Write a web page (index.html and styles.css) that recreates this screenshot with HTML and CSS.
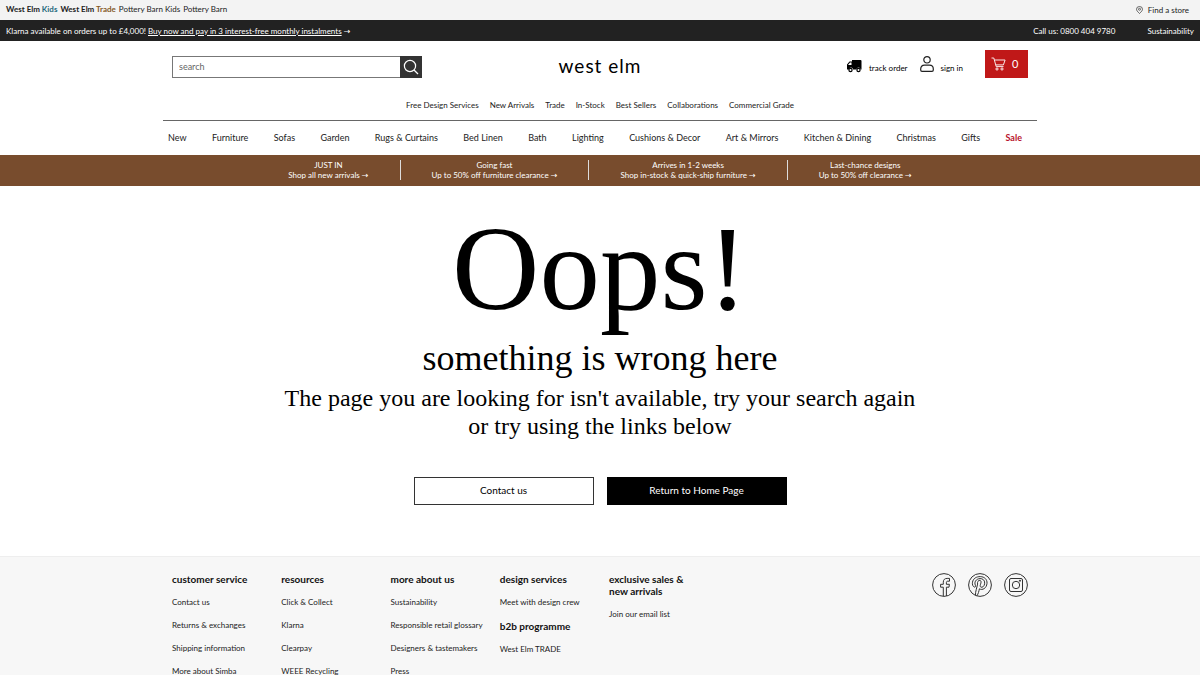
FILE: index.html
```html
<!DOCTYPE html>
<html lang="en">
<head>
    <meta charset="UTF-8">
    <meta name="viewport" content="width=device-width, initial-scale=1.0">
    <title>West Elm</title>
    <link rel="stylesheet" href="styles.css">
</head>
<body>
    <div class="brand-bar">
        <nav class="brands">
            <a href="#"><b>West Elm <span class="kids">Kids</span></b></a>
            <a href="#"><b>West Elm <span class="trade">Trade</span></b></a>
            <a href="#">Pottery Barn Kids</a>
            <a href="#">Pottery Barn</a>
        </nav>
        <a class="find-store" href="#">
            <svg width="7" height="8" viewBox="0 0 14 16" fill="none" stroke="#444" stroke-width="1.6">
                <path d="M7 15C3 11 1 9 1 6.5a6 5.5 0 0 1 12 0C13 9 11 11 7 15z"/>
                <circle cx="7" cy="6.5" r="2"/>
            </svg>
            Find a store
        </a>
    </div>

    <div class="message-bar">
        <p>Klarna available on orders up to £4,000! <a class="underlined" href="#">Buy now and pay in 3 interest-free monthly instalments</a> <span class="arrow">→</span></p>
        <div class="message-links">
            <a href="#">Call us: 0800 404 9780</a>
            <a href="#">Sustainability</a>
        </div>
    </div>

    <header class="container">
        <div class="header-top">
            <form class="search">
                <input type="text" placeholder="search" aria-label="search">
                <button type="button" aria-label="Search">
                    <svg width="16" height="16" viewBox="0 0 16 16" fill="none" stroke="#fff" stroke-width="1.2">
                        <circle cx="7" cy="7" r="5.6"/>
                        <path d="M11 11l4 4"/>
                    </svg>
                </button>
            </form>
            <a class="logo" href="#">west elm</a>
            <div class="account">
                <a class="track" href="#">
                    <svg width="16" height="14" viewBox="0 0 32 28">
                        <path d="M12 2h17a2 2 0 0 1 2 2v17h-2a4 4 0 0 0-8 0h-7a4 4 0 0 0-8 0H2v-10l5-6h5z" fill="#000"/>
                        <path d="M4 12l4-5h3v5z" fill="#fff"/>
                        <circle cx="9" cy="22" r="3.2" fill="#fff" stroke="#000" stroke-width="2.4"/>
                        <circle cx="25" cy="22" r="3.2" fill="#fff" stroke="#000" stroke-width="2.4"/>
                    </svg>
                    <span>track order</span>
                </a>
                <a class="sign-in" href="#">
                    <svg width="14" height="16" viewBox="0 0 14 16" fill="none" stroke="#222" stroke-width="1.2">
                        <circle cx="7" cy="3.8" r="3.2"/>
                        <path d="M2 15.400a1.300 1.300 0 0 1-1.300-1.300v-1C.7 10.600 2 9.200 4.500 9.200h5c2.500 0 3.800 1.400 3.800 3.900v1a1.300 1.300 0 0 1-1.300 1.300z"/>
                    </svg>
                    <span>sign in</span>
                </a>
                <a class="cart" href="#">
                    <svg width="15" height="14" viewBox="0 0 15 14" fill="none" stroke="#fff" stroke-width="0.9">
                        <path d="M.5 1h2.300l2.400 8.600h7.300M3.500 3h10.600l-1.700 4.900H4.900"/>
                        <circle cx="6" cy="12" r="1.1"/>
                        <circle cx="11" cy="12" r="1.1"/>
                    </svg>
                    0
                </a>
            </div>
        </div>

        <nav class="quick-nav">
            <a href="#">Free Design Services</a>
            <a href="#">New Arrivals</a>
            <a href="#">Trade</a>
            <a href="#">In-Stock</a>
            <a href="#">Best Sellers</a>
            <a href="#">Collaborations</a>
            <a href="#">Commercial Grade</a>
        </nav>

        <nav class="main-nav">
            <a href="#">New</a>
            <a href="#">Furniture</a>
            <a href="#">Sofas</a>
            <a href="#">Garden</a>
            <a href="#">Rugs &amp; Curtains</a>
            <a href="#">Bed Linen</a>
            <a href="#">Bath</a>
            <a href="#">Lighting</a>
            <a href="#">Cushions &amp; Decor</a>
            <a href="#">Art &amp; Mirrors</a>
            <a href="#">Kitchen &amp; Dining</a>
            <a href="#">Christmas</a>
            <a href="#">Gifts</a>
            <a class="sale" href="#">Sale</a>
        </nav>
    </header>

    <div class="promo">
        <a href="#">JUST IN<br>Shop all new arrivals <span class="arrow">→</span></a>
        <a href="#">Going fast<br>Up to 50% off furniture clearance <span class="arrow">→</span></a>
        <a href="#">Arrives in 1-2 weeks<br>Shop in-stock &amp; quick-ship furniture <span class="arrow">→</span></a>
        <a href="#">Last-chance designs<br>Up to 50% off clearance <span class="arrow">→</span></a>
    </div>

    <main class="error">
        <h1>Oops!</h1>
        <h2>something is wrong here</h2>
        <p>The page you are looking for isn't available, try your search again<br>or try using the links below</p>
        <div class="actions">
            <a class="btn" href="#">Contact us</a>
            <a class="btn btn-dark" href="#">Return to Home Page</a>
        </div>
    </main>

    <footer>
        <div class="container footer-grid">
            <div class="footer-col">
                <h3>customer service</h3>
                <a href="#">Contact us</a>
                <a href="#">Returns &amp; exchanges</a>
                <a href="#">Shipping information</a>
                <a href="#">More about Simba</a>
            </div>
            <div class="footer-col">
                <h3>resources</h3>
                <a href="#">Click &amp; Collect</a>
                <a href="#">Klarna</a>
                <a href="#">Clearpay</a>
                <a href="#">WEEE Recycling</a>
            </div>
            <div class="footer-col">
                <h3>more about us</h3>
                <a href="#">Sustainability</a>
                <a href="#">Responsible retail glossary</a>
                <a href="#">Designers &amp; tastemakers</a>
                <a href="#">Press</a>
            </div>
            <div class="footer-col">
                <h3>design services</h3>
                <a href="#">Meet with design crew</a>
                <h3>b2b programme</h3>
                <a href="#">West Elm TRADE</a>
            </div>
            <div class="footer-col">
                <h3>exclusive sales &amp;<br>new arrivals</h3>
                <a href="#">Join our email list</a>
            </div>
            <div class="social">
                <a href="#" aria-label="Facebook">
                    <svg width="24" height="24" viewBox="0 0 24 24" fill="none" stroke="#333" stroke-width="1">
                        <circle cx="12" cy="12" r="11.400"/>
                        <path d="M11.300 23v-8.800H8.600v-2.900h2.700V9.200c0-2.600 1.500-3.800 3.800-3.800h2.400v2.800h-1.700c-1 0-1.400.5-1.400 1.400v1.700h3l-.4 2.900h-2.600V23"/>
                    </svg>
                </a>
                <a href="#" aria-label="Pinterest">
                    <svg width="24" height="24" viewBox="0 0 24 24" fill="none" stroke="#333" stroke-width="1">
                        <circle cx="12" cy="12" r="11.400"/>
                        <path d="M7.500 22.300c-.2-2 .3-4 .8-5.900l1.300-5.300c-.5-2.300.8-4 2.300-3.700 2.600.6 0 4.300.3 5.800.6 2.200 4.300 1 4.500-3 .2-3.200-2.200-4.700-4.700-4.600-3.900.1-6 3.600-4.700 6.500.5.9.2 1.900-.5 2.100-2.200-.5-2.700-3-2.300-5C5.100 5.500 8.500 3.500 12.300 3.600c4.200.1 7 2.900 6.700 6.700-.4 5-4.600 7.300-7.600 5.500-.5 2.500-1.100 5-2.500 7"/>
                    </svg>
                </a>
                <a href="#" aria-label="Instagram">
                    <svg width="24" height="24" viewBox="0 0 24 24" fill="none" stroke="#333" stroke-width="1">
                        <circle cx="12" cy="12" r="11.400"/>
                        <rect x="5.500" y="5.500" width="13" height="13" rx="1.500"/>
                        <circle cx="12" cy="12" r="3.700"/>
                        <circle cx="16" cy="7.700" r=".6" fill="#333"/>
                    </svg>
                </a>
            </div>
        </div>
    </footer>
</body>
</html>
```
FILE: styles.css
```css
* {
    box-sizing: border-box;
}

body {
    margin: 0;
    background-color: #fff;
    color: #222;
    font-family: Lato, "Open Sans", sans-serif;
    font-size: 8px;
    line-height: 10px;
    overflow-x: hidden;
}

a {
    color: inherit;
    text-decoration: none;
}

h1,
h2,
h3,
p {
    margin: 0;
    font-weight: normal;
}

.container {
    max-width: 874px;
    margin: 0 auto;
}

.arrow {
    font-family: "DejaVu Sans", sans-serif;
    line-height: 1;
}

.brand-bar {
    display: flex;
    justify-content: space-between;
    height: 20px;
    padding: 4px 11px 0 6px;
    background-color: #f3f3f3;
}

.brands {
    display: flex;
    gap: 3px;
}

.kids {
    color: #1f6a7d;
}

.trade {
    color: #85591f;
}

.find-store {
    display: flex;
    align-items: center;
    gap: 5px;
    height: 12px;
}

.message-bar {
    display: flex;
    justify-content: space-between;
    align-items: center;
    height: 21px;
    padding: 0 6px;
    background-color: #222;
    color: #fff;
}

.message-links {
    display: flex;
    gap: 32px;
}

.underlined {
    text-decoration: underline;
}

.header-top {
    display: grid;
    grid-template-columns: 1fr auto 1fr;
    align-items: center;
    padding: 9px 9px 0;
}

.search {
    display: flex;
    width: 250px;
    height: 22px;
    margin-top: 5px;
}

.search input {
    flex: 1;
    min-width: 0;
    padding: 0 6px;
    border: 1px solid #777;
    border-right: 0;
    border-radius: 0;
    font-family: inherit;
    font-size: 9px;
}

.search input::placeholder {
    color: #666;
}

.search button {
    display: flex;
    align-items: center;
    justify-content: center;
    width: 22px;
    padding: 0;
    border: 0;
    background-color: #333;
}

.logo {
    margin-top: 3px;
    color: #000;
    font-size: 19px;
    line-height: 24px;
    letter-spacing: 1px;
}

.account {
    display: flex;
    justify-content: flex-end;
    align-items: center;
    color: #000;
}

.track,
.sign-in {
    display: flex;
    align-items: center;
    gap: 7px;
    margin-right: 12px;
}

.sign-in {
    margin-right: 22px;
}

.track {
    padding-top: 4px;
}

.track span {
    padding-top: 4px;
}

.sign-in span {
    padding-top: 8px;
}

.cart {
    display: flex;
    align-items: center;
    gap: 6px;
    width: 43px;
    height: 28px;
    padding-left: 6px;
    background-color: #c01818;
    color: #fff;
    font-size: 11px;
}

.quick-nav {
    display: flex;
    justify-content: center;
    gap: 11px;
    padding: 22px 0 10px;
}

.main-nav {
    display: flex;
    justify-content: space-between;
    align-items: center;
    height: 35px;
    padding: 0 15px 0 5px;
    border-top: 1px solid #666;
    font-size: 9px;
}

.sale {
    color: #b8122b;
    font-weight: bold;
}

.promo {
    display: flex;
    justify-content: center;
    padding: 5px 0 6px;
    background-color: #784c2d;
    color: #fff;
    text-align: center;
}

.promo a {
    padding: 0 31px;
}

.promo a + a {
    border-left: 1px solid #ddd;
}

.error {
    padding: 24px 0 51px;
    color: #000;
    font-family: "Liberation Serif", serif;
    text-align: center;
}

.error h1 {
    font-size: 121px;
    line-height: 116px;
}

.error h2 {
    margin-top: 12px;
    font-size: 36px;
    line-height: 40px;
}

.error p {
    margin-top: 6px;
    font-size: 24px;
    line-height: 28px;
}

.actions {
    display: flex;
    justify-content: center;
    gap: 13px;
    margin-top: 37px;
    font-family: Lato, sans-serif;
}

.btn {
    width: 180px;
    padding-bottom: 2px;
    border: 1px solid #333;
    font-size: 10px;
    line-height: 24px;
}

.btn-dark {
    border-color: #000;
    background-color: #000;
    color: #fff;
}

footer {
    padding-bottom: 24px;
    border-top: 1px solid #eee;
    background-color: #f7f7f7;
    line-height: 11px;
}

.footer-grid {
    display: grid;
    grid-template-columns: repeat(8, 1fr);
    padding-top: 16px;
}

.footer-col {
    display: flex;
    flex-direction: column;
    align-items: flex-start;
    gap: 12px;
    padding-left: 9px;
    white-space: nowrap;
}

.footer-col h3 {
    color: #111;
    font-size: 10px;
    line-height: 12px;
    font-weight: bold;
}

.social {
    grid-column: 6 / 9;
    display: flex;
    justify-content: flex-end;
    gap: 12px;
    padding-right: 9px;
}
```
